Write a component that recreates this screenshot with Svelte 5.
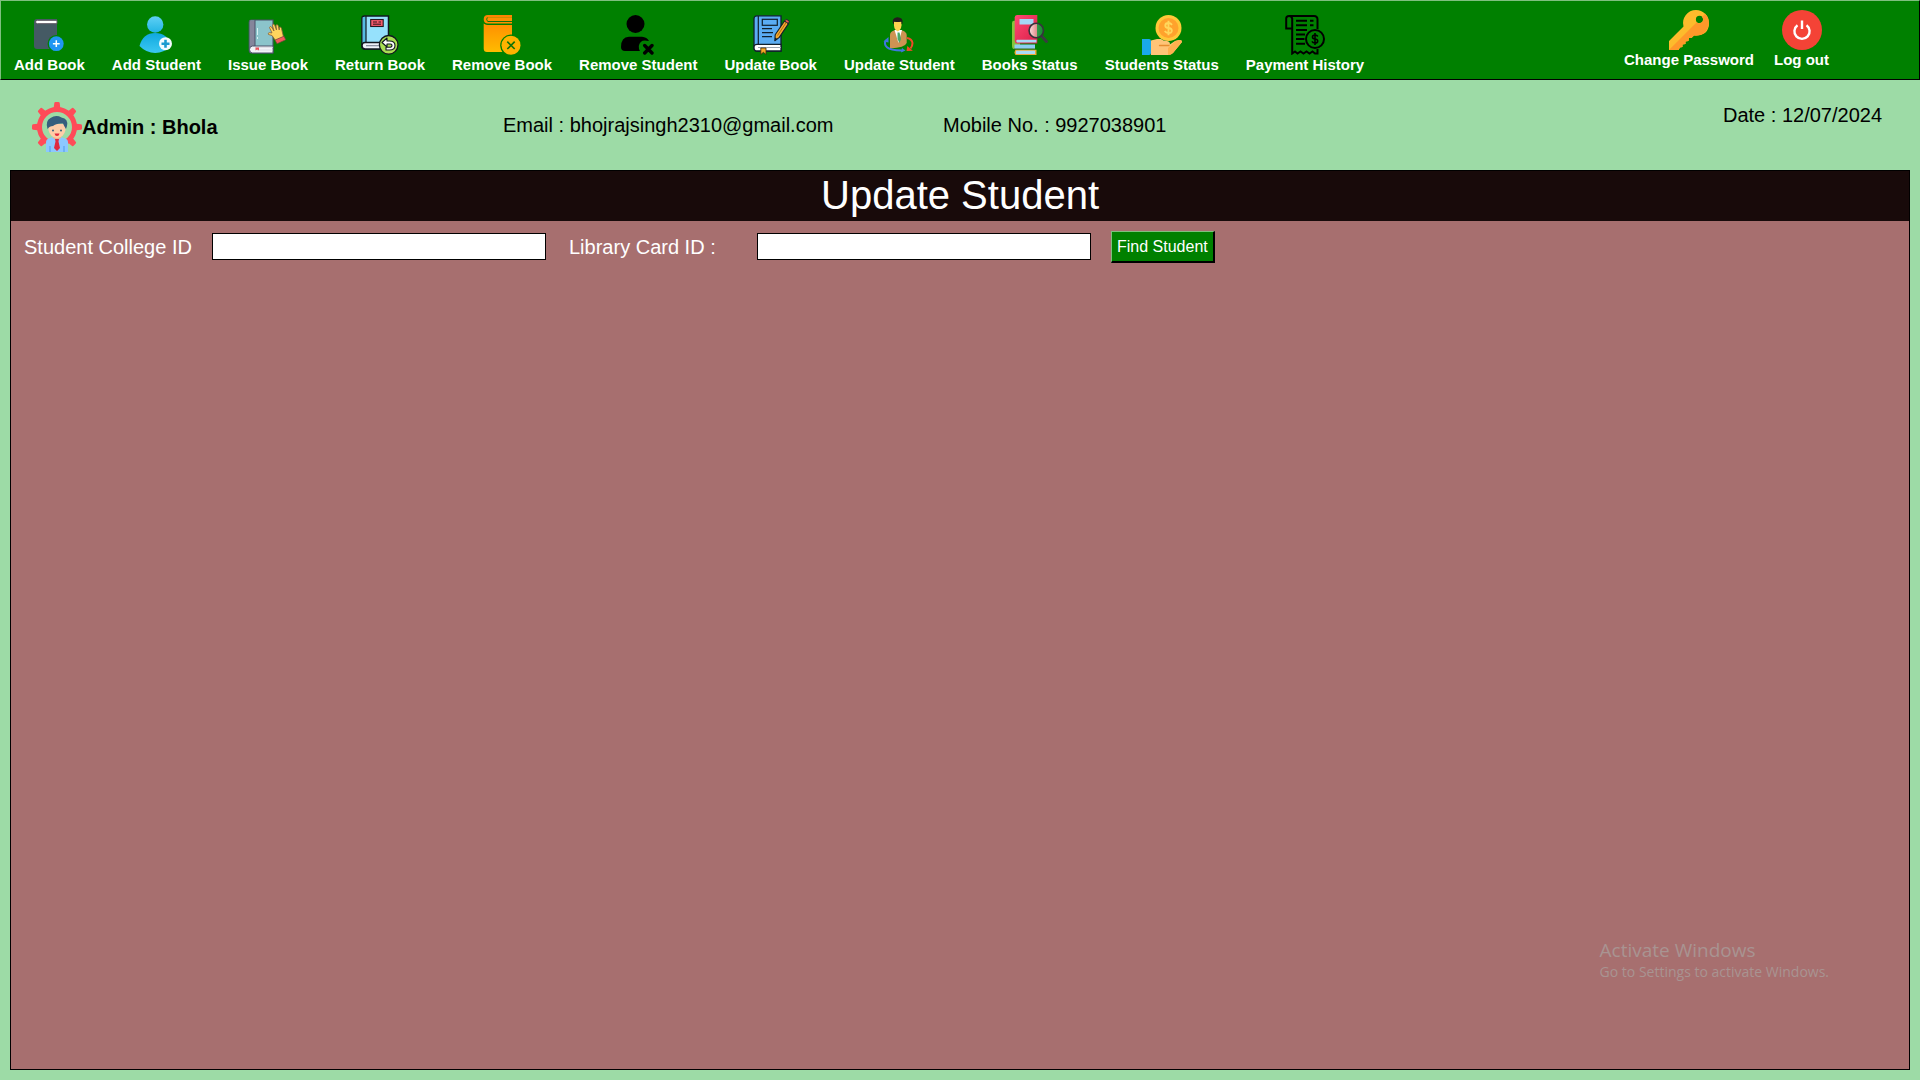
<script>
  let collegeId = $state('');
  let cardId = $state('');
</script>

<div class="page">
  <header class="toolbar">
    <nav class="tools" aria-label="Library actions">
      <button type="button">
        <svg viewBox="0 0 40 40" aria-hidden="true">
          <path d="M8 4H28V34H8Q5 34 5 31V7Q5 4 8 4Z" fill="#455a64" />
          <path d="M28 5.300H8.500Q6.500 5.300 6.500 7T8.500 8.700H28Z" fill="#fff" stroke="#5b5560" stroke-width="1" />
          <circle cx="27.300" cy="28.700" r="8.700" fill="#008000" />
          <circle cx="27.300" cy="28.700" r="7.400" fill="#2196f3" />
          <path d="M27.300 25.300V32.100M23.900 28.700H30.700" stroke="#fff" stroke-width="1.500" />
        </svg>
        <span>Add Book</span>
      </button>
      <button type="button">
        <svg viewBox="0 0 40 40" aria-hidden="true">
          <defs>
            <linearGradient id="head" x2="0" y2="1"><stop stop-color="#5fd0f5" /><stop offset="1" stop-color="#22b4e4" /></linearGradient>
            <linearGradient id="torso" x2="0" y2="1"><stop stop-color="#0fa8df" /><stop offset="1" stop-color="#3cc8f2" /></linearGradient>
          </defs>
          <circle cx="19.200" cy="9.500" r="8.200" fill="url(#head)" />
          <path d="M3.500 31C6 22 11 18 19.200 18S33 22 35 31Q28 38 19.200 38T3.500 31Z" fill="url(#torso)" />
          <circle cx="29.500" cy="28.700" r="6.500" fill="#f4fbff" />
          <path d="M29.500 24.700V32.700M25.500 28.700H33.500" stroke="#1c9bd0" stroke-width="2.600" />
        </svg>
        <span>Add Student</span>
      </button>
      <button type="button">
        <svg viewBox="0 0 40 40" aria-hidden="true">
          <path d="M3 5H25V38H3.500Q1.200 38 1.200 35V7Q1.200 5 3 5Z" fill="#8bc4cb" stroke="#4b5068" stroke-width="1.100" />
          <path d="M1.800 5.600H7V31L1.800 34Z" fill="#85859b" />
          <path d="M7 5V31" stroke="#4b5068" stroke-width="1" />
          <path d="M25 31H4.500Q1.500 31 1.500 34.500T4.500 38H25Z" fill="#f3f3f7" stroke="#4b5068" stroke-width="1" />
          <path d="M7 32.500H25M9 35H25" stroke="#d5d5e0" stroke-width=".7" />
          <path d="M7.500 32.500H11V35.500L9.200 34.500L7.500 35.500Z" fill="#e8525b" />
          <path d="M9.500 13V20M9.500 22V24" stroke="#d4f0f2" stroke-width="1" />
          <path d="M27.500 25.500L24 20.500L20.500 19.500Q19.500 18 21.500 17.600L24 18L21.500 12.500Q22 10.800 23.500 12L26 16L24.300 10Q25.500 8.300 26.700 10L28.500 15L28 10Q29.300 9 30.300 10.700L31.200 15L31.500 12Q33 11.500 33.500 13.500L35.500 22Z" fill="#ffd45e" stroke="#8a6038" stroke-width=".8" stroke-linejoin="round" />
          <path d="M27 25L36 21.200L37.700 24.800L29 28.800Z" fill="#f25a5a" stroke="#74453d" stroke-width=".7" />
        </svg>
        <span>Issue Book</span>
      </button>
      <button type="button">
        <svg viewBox="0 0 40 40" aria-hidden="true">
          <path d="M4.500 1H28.500V34H4.500Q2 34 2 31V3.500Q2 1 4.500 1Z" fill="#96e1fc" stroke="#101820" stroke-width="1.500" />
          <path d="M2.700 2H6V27L2.700 29Z" fill="#54bde4" />
          <path d="M6 1V27" stroke="#101820" stroke-width="1.200" />
          <path d="M28.500 27.500H5Q2 27.500 2 30.700T5 34H28.500Z" fill="#eef2fa" stroke="#101820" stroke-width="1.500" />
          <path d="M6 30.700H21" stroke="#7a8293" stroke-width="1.100" />
          <rect x="10.700" y="4.500" width="12.500" height="7" fill="#f3596a" stroke="#251820" stroke-width="1.100" />
          <path d="M13 7H17M18.500 7H21M13 9.200H21" stroke="#30161b" stroke-width="1" />
          <circle cx="28.700" cy="29.800" r="9.300" fill="#a8df53" stroke="#101820" stroke-width="1.300" />
          <path d="M22 27.500L27 23V26H29.500Q35 26 35 30.500T29.500 35H26V32.300H29.500Q32 32.300 32 30.500T29.500 29H27V32Z" fill="#fff" stroke="#101820" stroke-width="1.100" stroke-linejoin="round" />
        </svg>
        <span>Return Book</span>
      </button>
      <button type="button">
        <svg viewBox="0 0 40 40" aria-hidden="true">
          <defs><linearGradient id="amber" gradientUnits="userSpaceOnUse" x1="0" y1="0" x2="0" y2="40"><stop stop-color="#ff8200" /><stop offset="1" stop-color="#ffc000" /></linearGradient></defs>
          <path d="M30 0V2.300H6Q4.300 2.300 4.300 4.300T6 6.300H30V8.500H6Q1.700 8.500 1.700 4.300T6 0Z" fill="url(#amber)" />
          <path d="M6 2.300H30V6.300H6Q4.500 4.300 6 2.300Z" fill="#ff9000" />
          <path d="M5.500 6.500H30" stroke="#12730a" stroke-width="1" />
          <path d="M1.700 8.500Q4 10 6 10H30V37H5Q1.700 37 1.700 33.500Z" fill="url(#amber)" />
          <circle cx="29" cy="30.300" r="10.800" fill="#008000" />
          <circle cx="29" cy="30.300" r="9.500" fill="#ffb300" />
          <path d="M25.300 26.600L32.700 34M32.700 26.600L25.300 34" stroke="#12730a" stroke-width="1.600" />
        </svg>
        <span>Remove Book</span>
      </button>
      <button type="button">
        <svg viewBox="0 0 40 40" aria-hidden="true">
          <circle cx="17.500" cy="9" r="9" />
          <path d="M11 21.700H24Q29 22 31 26Q22 23.500 20.800 31Q20.600 34 22 36H7Q3 36 3 32Q3 22 11 21.700Z" />
          <path d="M26.700 30.500L34 38M34 30.500L26.700 38" stroke="#000" stroke-width="3.400" stroke-linecap="round" />
        </svg>
        <span>Remove Student</span>
      </button>
      <button type="button">
        <svg viewBox="0 0 40 40" aria-hidden="true">
          <path d="M6 .8H30V36H6Q3 36 3 32.500V4Q3 .8 6 .8Z" fill="#5aacf3" stroke="#10202c" stroke-width="1.300" />
          <path d="M7.300 1V29" stroke="#10202c" stroke-width="1.200" />
          <path d="M30 29.300H6Q3 29.300 3 32.700T6 36H30Z" fill="#fff" stroke="#10202c" stroke-width="1.300" />
          <path d="M7 32.500H30" stroke="#9aa5b0" stroke-width="1" />
          <rect x="11.300" y="4.300" width="15" height="6" fill="#5aacf3" stroke="#10202c" stroke-width="1.200" />
          <path d="M11 13.700H21M11 17.700H22M11 21.700H21" stroke="#10202c" stroke-width="1.200" />
          <path d="M9.800 33H15V39.500L12.400 37.300L9.800 39.500Z" fill="#f7aa25" stroke="#3a2a10" stroke-width=".8" />
          <path d="M23.800 25.700L24.200 19.800L33.500 6L37.500 8.600L28.300 22.400Z" fill="#f6a82c" stroke="#10202c" stroke-width="1.100" stroke-linejoin="round" />
          <path d="M33.500 6Q35 3.700 37 5T37.500 8.600Z" fill="#ee5a52" stroke="#10202c" stroke-width=".9" />
          <path d="M26.500 20.500L35.300 7.300" stroke="#9b5a13" stroke-width=".8" />
          <path d="M23.800 25.700L24 22.500L26.500 24Z" fill="#10202c" />
        </svg>
        <span>Update Book</span>
      </button>
      <button type="button">
        <svg viewBox="0 0 40 40" aria-hidden="true">
          <path d="M11 33.500V20Q11 16.500 15 15.500L19 14.500L23.500 15.500Q27.500 17 27.700 20V28Q26 32.500 11 33.500Z" fill="#cf9353" />
          <path d="M15.500 15L19.500 28L23 15Z" fill="#fff" />
          <path d="M18.500 17.500H20.500L22 24L20.500 28L18.500 24Z" fill="#4aa866" />
          <path d="M15 7Q18.500 4 22.500 7V10.500Q22 15 18.800 16.500Q15.300 15 15 10.500Z" fill="#ffd34f" />
          <path d="M14 8.500Q12.500 3 18 2.200Q24.500 2 23.500 8.500L22.500 9V6.500Q18 7.500 15 6.500V9Z" fill="#241b1d" />
          <path d="M7 25Q4.500 29 8 32.300T23.500 35.500" fill="none" stroke="#3f76e0" stroke-width="2" />
          <path d="M4.500 26.500L9.500 22V27.500Z" fill="#3f76e0" />
          <path d="M23 33L26.500 35.500L22 37.500Z" fill="#3f76e0" />
          <path d="M28 23Q33 24 33.500 28Q33.500 31 31.500 33.500" fill="none" stroke="#f04a28" stroke-width="2" />
          <path d="M28.300 31L33.800 35.800L27.500 36Z" fill="#f04a28" />
        </svg>
        <span>Update Student</span>
      </button>
      <button type="button">
        <svg viewBox="0 0 40 40" aria-hidden="true">
          <defs>
            <linearGradient id="cover" x2="1" y2="1"><stop stop-color="#ff4a72" /><stop offset="1" stop-color="#d91e48" /></linearGradient>
            <linearGradient id="lens"><stop stop-color="#ffe0e0" /><stop offset=".55" stop-color="#e08a8a" /><stop offset=".56" stop-color="#31994a" /><stop offset="1" stop-color="#168a2e" /></linearGradient>
          </defs>
          <path d="M4 5.700H10V34H4Q2 34 2 31V8Q2 5.700 4 5.700Z" fill="#86c53b" />
          <path d="M4.500 29.500H25V34H4.500Z" fill="#8dcff2" />
          <path d="M4 34H25" stroke="#386b22" stroke-width="1" />
          <path d="M5.500 34.700H26.500V40H5.500Q3.500 37.500 5.500 34.700Z" fill="#efaa39" />
          <path d="M6 35.700H25V39H6Z" fill="#a8dcf7" />
          <path d="M7 0H27.300V28.500H7Q4.700 28 4.700 25.500V2.500Q4.700 0 7 0Z" fill="url(#cover)" />
          <path d="M7 24.800H26.500V27.500H7Q5.500 26 7 24.800Z" fill="#a8dcf7" />
          <rect x="9.500" y="4" width="14" height="5.500" fill="#a5d8f5" />
          <path d="M31.500 21L36.500 26.500" stroke="#3a3a40" stroke-width="3" stroke-linecap="round" />
          <circle cx="26.300" cy="15.500" r="7.200" fill="url(#lens)" stroke="#35343a" stroke-width="1.600" />
        </svg>
        <span>Books Status</span>
      </button>
      <button type="button">
        <svg viewBox="0 0 40 40" aria-hidden="true">
          <circle cx="26.500" cy="13" r="13" fill="#ffc839" />
          <circle cx="26.500" cy="13" r="10" fill="#ffa22c" />
          <path d="M30 9.800Q28.500 8 26.500 8Q23.300 8 23.300 10.500T26.500 13T29.800 15.600T26.500 18Q24 18 22.800 16M26.500 5.800V20.200" fill="none" stroke="#ffd75c" stroke-width="1.900" />
          <path d="M9 25.500L15 24H19Q21 26 25 26Q28.500 26.500 27.800 29.500L33 26L37 25Q40 24.500 40 27L31 38Q29 40 26 40H9Z" fill="#ffc477" />
          <path d="M33.500 26L37 25Q40 24.500 40 27L31 38Q29 40 26 40V33Z" fill="#ffb04f" />
          <path d="M17.500 30.500H27" stroke="#e78d30" stroke-width="1.300" stroke-linecap="round" />
          <path d="M0 24H7Q9 24 9 26V38Q9 40 7 40H0Z" fill="#19a9ea" />
        </svg>
        <span>Students Status</span>
      </button>
      <button type="button">
        <svg viewBox="0 0 40 40" aria-hidden="true">
          <g fill="none" stroke="#000" stroke-width="2">
            <path d="M7 13.500H1.200V3.500Q1.200 1 4 1T7.200 3.500V38.500L10 36.500L12.500 38.500L15.500 36.500L18.500 38.500L21.500 36.500L24.500 38.500L27.500 36.500L30 38.500H32.500V34M4 1H29Q32.500 1 32.500 4.500V14" />
            <path d="M11 5.700H22M11 10.300H22M11 15H22M11 19.500H20M11 24H19.500M11 28.700H20" />
            <path d="M25 5.700H28.500M25 10.300H28.500" />
            <circle cx="30" cy="24" r="9" />
          </g>
          <path d="M32.800 21.500Q32 20 30 20Q27.500 20 27.500 22T30 24T32.700 26T30 28Q27.800 28 27 26.300M30 18V30" fill="none" stroke="#000" stroke-width="1.600" />
        </svg>
        <span>Payment History</span>
      </button>
    </nav>
    <div class="account">
      <button type="button">
        <svg viewBox="0 0 40 40" aria-hidden="true">
          <path fill-rule="evenodd" d="M27 0A13 13 0 0 1 40 13Q40 26 25 25.500L22.500 28H20L19.500 31L16.500 31.500V34L13.500 34.500V37L11 37.500L9.500 40H0V31L14.500 16.500A13 13 0 0 1 27 0ZM30.500 5.800A3.600 3.600 0 1 0 30.500 13A3.600 3.600 0 1 0 30.500 5.800Z" fill="#fdbb2c" />
          <path d="M36.200 3.800Q41 9 39.500 16Q36.500 27 25 25.500L22.500 28H20L19.500 31L16.500 31.500V34L13.500 34.500V37L11 37.500L9.500 40H0L27.700 12.300Q30.500 14.300 33.200 11.700Q35 9 33 6.900Z" fill="#ff982a" />
        </svg>
        <span>Change Password</span>
      </button>
      <button type="button">
        <svg viewBox="0 0 40 40" aria-hidden="true">
          <circle cx="20" cy="20" r="20" fill="#f44336" />
          <path d="M15.500 15.200A7.600 7.600 0 1 0 24.500 15.200M20 10.500V19" fill="none" stroke="#fff" stroke-width="2.400" />
        </svg>
        <span>Log out</span>
      </button>
    </div>
  </header>

  <section class="profile">
    <div class="admin">
      <svg viewBox="0 0 50 50" aria-hidden="true">
        <g fill="#ff4b58">
          <path id="tooth" d="M21.500 8L22.300 1Q22.500 0 23.500 0H26.500Q27.500 0 27.700 1L28.500 8Z" />
          <use href="#tooth" transform="rotate(45 25 25)" />
          <use href="#tooth" transform="rotate(90 25 25)" />
          <use href="#tooth" transform="rotate(135 25 25)" />
          <use href="#tooth" transform="rotate(225 25 25)" />
          <use href="#tooth" transform="rotate(270 25 25)" />
          <use href="#tooth" transform="rotate(315 25 25)" />
        </g>
        <circle cx="25" cy="25" r="17.500" fill="none" stroke="#ff4b58" stroke-width="5" />
        <path d="M14 50V40Q14 37 18 36L25 34L32 36Q36 37 36 40V50Z" fill="#8cc8ff" />
        <path d="M14 43H36V50H14Z" fill="#8cc8ff" />
        <path d="M18 44V50M32 44V50" stroke="#5aa4ef" stroke-width="1.200" />
        <path d="M21 33H29V36L25 38L21 36Z" fill="#f3b285" />
        <path d="M16.500 22H33.500V28Q32 35.500 25 36Q18 35.500 16.500 28Z" fill="#ffcda8" />
        <path d="M15.500 27Q13 19 18.500 16Q24 12.500 29.500 15.500Q36.500 16.500 35 24L34 27Q32 24 31 21.500Q24 21 21 24Q17.500 24 15.500 27Z" fill="#365e7d" />
        <circle cx="21" cy="28.500" r="1" fill="#365e7d" />
        <circle cx="29" cy="28.500" r="1" fill="#365e7d" />
        <path d="M22.500 31.500H27.500Q27 34 25 34T22.500 31.500Z" fill="#e6293c" />
        <path d="M23 37H27L26.500 39.500L28 46L25 49L22 46L23.500 39.500Z" fill="#df2940" />
      </svg>
      <strong>Admin : Bhola</strong>
    </div>
    <span>Email : bhojrajsingh2310@gmail.com</span>
    <span>Mobile No. : 9927038901</span>
    <time datetime="2024-07-12">Date : 12/07/2024</time>
  </section>

  <main class="panel">
    <h1>Update Student</h1>
    <form onsubmit={(event) => event.preventDefault()}>
      <label class="college" for="college-id">Student College ID</label>
      <input id="college-id" type="text" bind:value={collegeId} />
      <label class="card" for="card-id">Library Card ID :</label>
      <input id="card-id" type="text" bind:value={cardId} />
      <button type="submit">Find Student</button>
    </form>
    <aside class="watermark">
      <p class="notice">Activate Windows</p>
      <p>Go to Settings to activate Windows.</p>
    </aside>
  </main>
</div>

<style>
  :global(body) {
    margin: 0;
  }

  .page {
    display: flex;
    flex-direction: column;
    box-sizing: border-box;
    min-height: 100vh;
    padding-bottom: 10px;
    background: #9ddba6;
    color: #000;
    font-family: "Liberation Sans", Arial, sans-serif;
    font-size: 20px;
    line-height: 24px;
  }

  .toolbar {
    display: flex;
    justify-content: space-between;
    box-sizing: border-box;
    min-height: 80px;
    padding: 0 90px 0 13px;
    border: 1px solid;
    border-color: #7fbf7f #000 #000 #7fbf7f;
    background: #008000;
  }

  .tools,
  .account {
    display: flex;
    align-items: flex-start;
  }

  .tools {
    gap: 27px;
    padding-top: 14px;
  }

  .account {
    gap: 20px;
    padding-top: 9px;
  }

  .toolbar button {
    display: flex;
    flex-direction: column;
    align-items: center;
    padding: 0;
    border: 0;
    background: none;
    color: #fff;
    font: bold 15px/20px "Liberation Sans", Arial, sans-serif;
    white-space: nowrap;
    cursor: pointer;
  }

  .toolbar svg {
    display: block;
    width: 40px;
    height: 40px;
  }

  .profile {
    display: grid;
    grid-template-columns: 471fr 440fr 780fr auto;
    align-items: center;
    box-sizing: border-box;
    min-height: 90px;
    padding: 0 38px 0 32px;
    white-space: nowrap;
  }

  .admin {
    display: flex;
    align-items: center;
    padding-top: 4px;
  }

  .admin svg {
    width: 50px;
    height: 50px;
  }

  .profile time {
    align-self: start;
    padding-top: 23px;
  }

  .panel {
    position: relative;
    flex: 1;
    margin: 0 10px;
    border: 1px solid #000;
    background: #a76f6f;
  }

  h1 {
    margin: 0;
    padding-bottom: 2px;
    background: #180a0a;
    color: #fff;
    font-size: 40px;
    font-weight: normal;
    line-height: 48px;
    text-align: center;
  }

  form {
    display: flex;
    align-items: center;
    padding: 10px 13px;
    color: #fff;
    white-space: nowrap;
  }

  .college {
    width: 188px;
  }

  .card {
    width: 188px;
    margin-left: 23px;
  }

  input {
    box-sizing: border-box;
    width: 334px;
    height: 27px;
    margin: 0 0 1px;
    padding: 2px;
    border: 1px solid #000;
    border-radius: 0;
    background: #fff;
    font: 20px/20px "Liberation Sans", Arial, sans-serif;
  }

  form button {
    height: 32px;
    margin-left: 20px;
    padding: 0 5px;
    border: solid;
    border-width: 1px 2px 2px 1px;
    border-color: #7fbf7f #000 #000 #7fbf7f;
    background: #008000;
    color: #fff;
    font: 16px/20px "Liberation Sans", Arial, sans-serif;
    cursor: pointer;
  }

  .watermark {
    position: absolute;
    right: 80px;
    bottom: 87px;
    color: #a99492;
    font: 14px/20px "Open Sans", "Noto Sans", sans-serif;
    pointer-events: none;
  }

  .watermark p {
    margin: 0;
  }

  .watermark .notice {
    font-size: 19px;
    line-height: 24px;
  }
</style>
